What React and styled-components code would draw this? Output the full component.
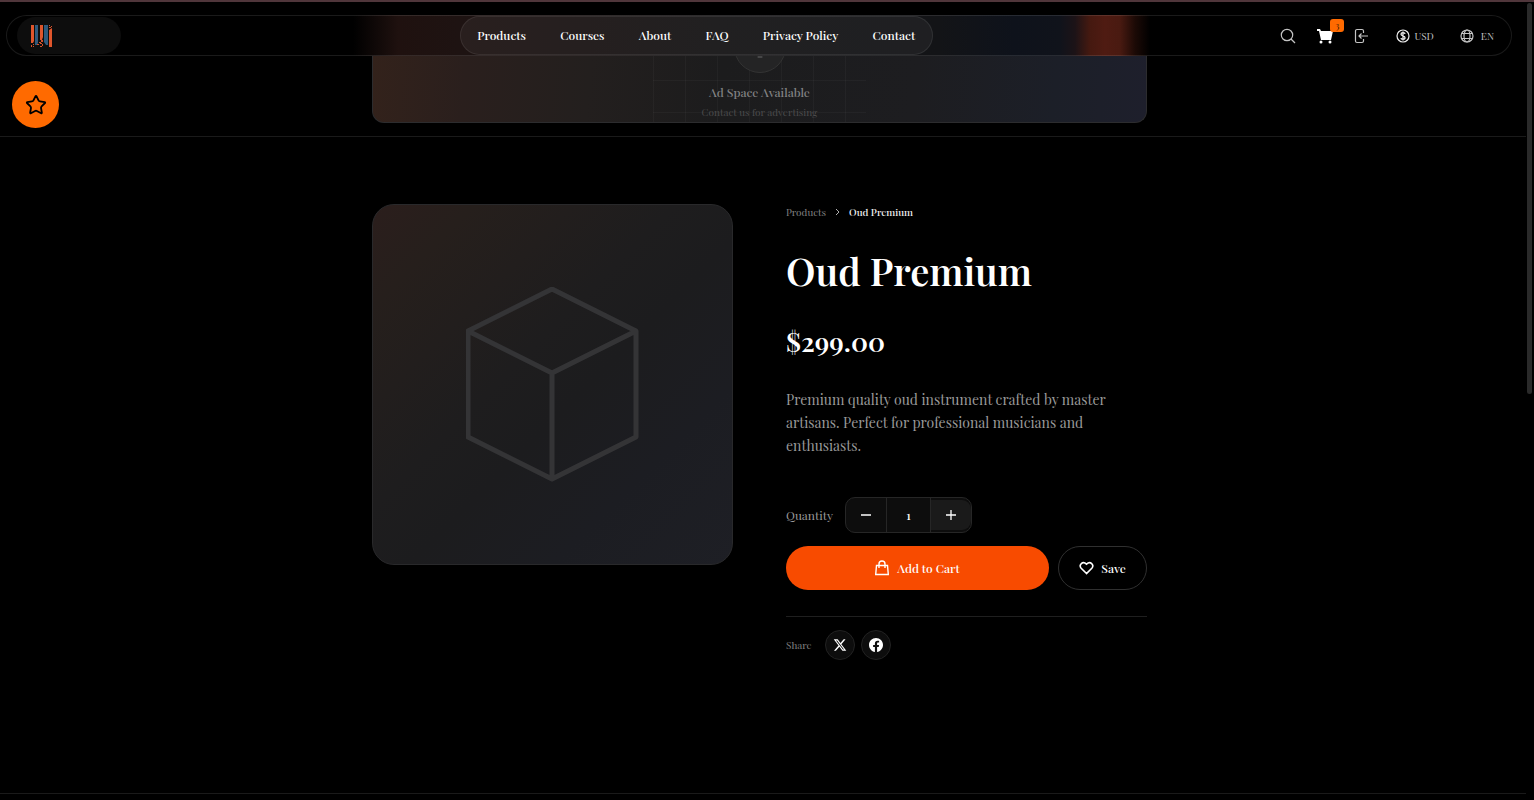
import { useState } from "react";
import styled, { createGlobalStyle, css } from "styled-components";
import { Lightbulb, Star } from "lucide-react";

const GlobalStyle = createGlobalStyle`
  * {
    box-sizing: border-box;
  }

  body {
    margin: 0;
    background-color: #000;
    color: #fff;
    font-family: "Playfair Display", "Liberation Serif", serif;
    font-size: 12px;
  }

  button,
  input {
    font-family: inherit;
    color: inherit;
  }

  a {
    color: inherit;
    text-decoration: none;
  }
`;

const Shell = styled.div`
  display: grid;
  grid-template-columns: 1fr 8px;
  min-height: 100vh;
  border-top: 2px solid #50363b;
`;

const Page = styled.div`
  display: flex;
  flex-direction: column;
`;

const ScrollTrack = styled.div`
  padding: 1px 2px 0 1px;
`;

const ScrollThumb = styled.div`
  height: 49%;
  border-radius: 3px;
  background-color: #2a2a2a;
`;

const Header = styled.header`
  display: flex;
  align-items: center;
  justify-content: space-between;
  height: 41px;
  margin: 13px 14px 0 6px;
  padding: 0 4px 0 10px;
  border: 1px solid rgba(255, 255, 255, 0.1);
  border-radius: 21px;
  background: linear-gradient(
    90deg,
    #000 23%,
    #1f110f 26%,
    #1e1312 30%,
    #161516 47%,
    #131417 62%,
    #0e121b 67%,
    #10131b 70%,
    #1c1317 71%,
    #451910 72%,
    #4f1b12 73%,
    #491a11 74%,
    #1c0a06 75%,
    #000 76%
  );
`;

const LogoLink = styled.a`
  display: flex;
  align-items: center;
  width: 104px;
  height: 37px;
  padding-left: 13px;
  border-radius: 19px;
  background-color: #0d0d0d;
`;

const Nav = styled.nav`
  display: flex;
  align-items: center;
  justify-content: space-between;
  width: 473px;
  height: 39px;
  padding: 0 17px 0 16px;
  border: 1px solid rgba(255, 255, 255, 0.08);
  border-radius: 20px;
  background-color: rgba(255, 255, 255, 0.05);
`;

const NavLink = styled.a`
  font-weight: 500;
  line-height: 16px;
  padding-bottom: 1px;
  white-space: nowrap;
`;

const Tools = styled.div`
  display: flex;
  align-items: center;
`;

const IconButton = styled.button`
  position: relative;
  display: flex;
  align-items: center;
  justify-content: center;
  width: 32px;
  height: 32px;
  margin-right: 5px;
  padding: 0;
  border: none;
  background: none;
  color: ${({ $bright }) => ($bright ? "#fff" : "#c4c4c4")};
`;

const Badge = styled.span`
  position: absolute;
  top: -1px;
  right: -3px;
  width: 14px;
  height: 13px;
  border-radius: 3px;
  background-color: #ff6a00;
  color: #3a1800;
  font-size: 9px;
  line-height: 13px;
  text-align: center;
`;

const TextButton = styled.button`
  display: flex;
  align-items: center;
  gap: ${({ $gap }) => $gap}px;
  height: 32px;
  padding: 0 13px;
  border: none;
  background: none;
  color: #c4c4c4;
  font-size: 10px;
`;

const AdSection = styled.section`
  padding: 0 7px 13px 0;
  border-bottom: 1px solid #1a1a1a;
`;

const AdBanner = styled.div`
  display: flex;
  justify-content: center;
  max-width: 775px;
  height: 67px;
  margin: 0 auto;
  overflow: hidden;
  border: 1px solid #2c2c2e;
  border-top: none;
  border-radius: 0 0 12px 12px;
  background: linear-gradient(
    95deg,
    #33221b 0%,
    #2a1f1d 12%,
    #231f1e 28%,
    #1c1c1d 45%,
    #1d1d20 70%,
    #1c1f28 88%,
    #1e1f2c 100%
  );
`;

const AdContent = styled.div`
  display: flex;
  flex-direction: column;
  align-items: center;
  justify-content: flex-end;
  width: 213px;
  background-image:
    linear-gradient(90deg, rgba(255, 255, 255, 0.03) 1px, transparent 1px),
    linear-gradient(rgba(255, 255, 255, 0.03) 1px, transparent 1px);
  background-size: 32px 32px;
  background-position: 0 24px;
`;

const AdIcon = styled.div`
  display: flex;
  flex-shrink: 0;
  align-items: center;
  justify-content: center;
  width: 52px;
  height: 52px;
  margin-bottom: 9px;
  border: 1px solid #343434;
  border-radius: 50%;
  background-color: #242425;
  color: #68686a;
`;

const AdText = styled.p`
  margin: 0;
  color: ${({ $dim }) => ($dim ? "#4b4b4c" : "#828283")};
  font-size: ${({ $dim }) => ($dim ? 10 : 12)}px;
  font-weight: ${({ $dim }) => ($dim ? 400 : 500)};
  line-height: 20px;
`;

const FavouriteButton = styled.button`
  position: fixed;
  top: 81px;
  left: 12px;
  display: flex;
  align-items: center;
  justify-content: center;
  width: 47px;
  height: 47px;
  padding: 0;
  border: none;
  border-radius: 50%;
  background-color: #ff6a00;
  color: #000;
`;

const Main = styled.main`
  padding: 67px 7px 133px 0;
`;

const Product = styled.div`
  display: grid;
  grid-template-columns: 1fr 1fr;
  gap: 53px;
  align-items: start;
  max-width: 775px;
  margin: 0 auto;
`;

const ProductImage = styled.div`
  display: flex;
  align-items: center;
  justify-content: center;
  aspect-ratio: 1;
  border: 1px solid #29292b;
  border-radius: 22px;
  background: linear-gradient(
    135deg,
    #2b1e1c 0%,
    #261f1c 14%,
    #1e1d1e 42%,
    #1c1c1e 55%,
    #1c1d22 75%,
    #1e1f25 100%
  );
  color: #343436;
`;

const Details = styled.div`
  display: flex;
  flex-direction: column;
`;

const Breadcrumb = styled.nav`
  display: flex;
  align-items: center;
  gap: 8px;
  color: #808080;
  font-size: 10px;
  line-height: 16px;
`;

const Current = styled.span`
  color: #f2f2f2;
  font-weight: 500;
`;

const Title = styled.h1`
  margin: 27px 0 0;
  font-size: 38px;
  font-weight: 600;
  line-height: 48px;
`;

const Price = styled.p`
  margin: 28px 0 0;
  font-size: 27px;
  font-weight: 600;
  line-height: 36px;
`;

const Description = styled.p`
  margin: 29px 0 0;
  color: #999;
  font-size: 14px;
  line-height: 23px;
`;

const QuantityRow = styled.div`
  display: flex;
  align-items: center;
  gap: 12px;
  margin-top: 40px;
  color: #999;
`;

const Stepper = styled.div`
  display: flex;
  align-items: center;
  width: 127px;
  height: 36px;
  overflow: hidden;
  border: 1px solid #262626;
  border-radius: 10px;
  background-color: #0d0d0d;
  color: #fff;
`;

const StepButton = styled.button`
  display: flex;
  align-items: center;
  justify-content: center;
  width: 40px;
  height: 30px;
  padding: 0;
  border: none;
  border-radius: ${({ $active }) => ($active ? "0 9px 9px 0" : "0")};
  background-color: ${({ $active }) => ($active ? "#1a1a1a" : "transparent")};
`;

const QuantityInput = styled.input`
  width: 45px;
  height: 34px;
  padding: 0;
  border: solid #262626;
  border-width: 0 1px;
  background: none;
  font-size: 12px;
  font-weight: 500;
  text-align: center;
`;

const Actions = styled.div`
  display: flex;
  gap: 9px;
  margin-top: 13px;
`;

const pill = css`
  display: flex;
  align-items: center;
  justify-content: center;
  height: 44px;
  padding: 0 0 1px;
  border-radius: 22px;
  font-size: 12px;
  font-weight: 500;
`;

const AddButton = styled.button`
  ${pill}
  flex: 1;
  gap: 8px;
  border: none;
  background-color: #f84b00;
`;

const SaveButton = styled.button`
  ${pill}
  width: 89px;
  gap: 7px;
  border: 1px solid #303030;
  background: none;
`;

const ShareRow = styled.div`
  display: flex;
  align-items: center;
  gap: 6px;
  margin-top: 26px;
  padding-top: 13px;
  border-top: 1px solid #1f1f1f;
`;

const ShareLabel = styled.span`
  margin-right: 7px;
  color: #808080;
  font-size: 10px;
`;

const ShareLink = styled.a`
  display: flex;
  align-items: center;
  justify-content: center;
  width: 30px;
  height: 30px;
  border: 1px solid #222;
  border-radius: 50%;
  background-color: #0d0d0d;
`;

const Footer = styled.footer`
  border-top: 1px solid #1a1a1a;
`;

const navItems = [
  "Products",
  "Courses",
  "About",
  "FAQ",
  "Privacy Policy",
  "Contact",
];

const Logo = () => (
  <svg width="24" height="24" viewBox="0 0 24 24">
    <path fill="#e0562c" d="M1 1h3v16l-1 2H1zM10 1h3v12l-1 3h-2zM19 6l3-2v19h-3z" />
    <path fill="#2f5a7c" d="M5 1h3v18l-1 2H5zM14 1h4v20h-2l-2-3z" />
    <path
      fill="#d4512b"
      d="M1 21h1v2H1zM3 20h1v1H3zM3 22h1v1H3zM7 20h2v1H7zM9 18h2v1H9zM11 16h2v2h-2zM10 19h2v1h-2zM12 20h1v2h-1zM10 22h2v1h-2zM19 1h1v1h-1zM21 2h1v1h-1zM19 3h2v1h-2z"
    />
  </svg>
);

const SearchIcon = () => (
  <svg width="16" height="16" viewBox="0 0 16 16" fill="none" stroke="currentColor" strokeWidth="1.200">
    <circle cx="7" cy="7" r="5.700" />
    <path d="M11 11l4 4" />
  </svg>
);

const CartIcon = () => (
  <svg width="18" height="18" viewBox="0 0 18 18" fill="currentColor">
    <path d="M1 2h3l1 2h12l-2 9H5L3 4H1z" />
    <circle cx="5" cy="15" r="1.500" />
    <circle cx="14" cy="15" r="1.500" />
  </svg>
);

const LoginIcon = () => (
  <svg width="16" height="16" viewBox="0 0 16 16" fill="none" stroke="currentColor" strokeWidth="1.200">
    <path d="M9.500 5V3A1.500 1.500 0 0 0 8 1.500H3A1.500 1.500 0 0 0 1.500 3v10A1.500 1.500 0 0 0 3 14.500h5a1.500 1.500 0 0 0 1.500-1.500v-2" />
    <path d="M14 8H5M7.500 5.500L5 8l2.500 2.500" />
  </svg>
);

const DollarIcon = () => (
  <svg width="14" height="14" viewBox="0 0 14 14" fill="none" stroke="#eee">
    <circle cx="7" cy="7" r="6" strokeWidth="1.200" />
    <path
      strokeWidth="1.300"
      d="M9 5C9 4 8 3.700 7 3.700S5 4 5 5.200C5 7.300 9 6.500 9 8.700 9 10 8 10.300 7 10.300S5 10 5 9M7 2.500v9"
    />
  </svg>
);

const GlobeIcon = () => (
  <svg width="14" height="14" viewBox="0 0 14 14" fill="none" stroke="currentColor" strokeWidth="1.200">
    <circle cx="7" cy="7" r="6" />
    <ellipse cx="7" cy="7" rx="3" ry="6" />
    <path d="M1.500 4.500h11M1.500 9.500h11" />
  </svg>
);

const CubeIcon = () => (
  <svg
    width="174"
    height="196"
    viewBox="0 0 174 196"
    fill="none"
    stroke="currentColor"
    strokeWidth="5"
    strokeLinejoin="round"
  >
    <path d="M86 2l84 42v106l-84 42-84-42V44zM2 44l84 42 84-42M86 86v106" />
  </svg>
);

const ChevronIcon = () => (
  <svg width="7" height="9" viewBox="0 0 7 9" fill="none" stroke="#b0b0b0">
    <path d="M2 1l3 3-3 3" />
  </svg>
);

const BagIcon = () => (
  <svg width="14" height="16" viewBox="0 0 14 16" fill="none" stroke="currentColor" strokeWidth="1.400">
    <path d="M1.500 5.500h11l.8 9H.7zM4 8V4a3 3 0 0 1 6 0v4" />
  </svg>
);

const HeartIcon = () => (
  <svg width="15" height="14" viewBox="0 0 15 14" fill="none" stroke="currentColor" strokeWidth="1.600">
    <path d="M7.500 12.500L2.200 7.200C-.5 4 3.500-.5 7.500 3.200c4-3.700 8 .8 5.300 4z" />
  </svg>
);

const XIcon = () => (
  <svg width="14" height="14" viewBox="0 0 24 24" fill="currentColor">
    <path d="M18.244 2.250h3.308l-7.227 8.260 8.502 11.240H16.170l-5.214-6.817L4.990 21.750H1.680l7.730-8.835L1.254 2.250H8.080l4.713 6.231zm-1.161 17.520h1.833L7.084 4.126H5.117z" />
  </svg>
);

const FacebookIcon = () => (
  <svg width="14" height="14" viewBox="0 0 24 24" fill="currentColor">
    <path d="M24 12.073C24 5.405 18.627 0 12 0S0 5.405 0 12.073C0 18.100 4.388 23.094 10.125 24v-8.437H7.078v-3.490h3.047v-2.660c0-3.025 1.792-4.697 4.533-4.697 1.312 0 2.686.236 2.686.236v2.971H15.830c-1.491 0-1.956.93-1.956 1.886v2.264h3.328l-.532 3.490h-2.796V24C19.612 23.094 24 18.100 24 12.073z" />
  </svg>
);

const SignIcon = ({ plus }) => (
  <svg width="12" height="12" viewBox="0 0 12 12" fill="none" stroke="currentColor" strokeWidth="1.300">
    <path d={plus ? "M1 6h10M6 1v10" : "M1 6h10"} />
  </svg>
);

const App = () => {
  const [quantity, setQuantity] = useState(1);

  return (
    <>
      <GlobalStyle />
      <Shell>
        <Page>
          <Header>
            <LogoLink href="#home" aria-label="Home">
              <Logo />
            </LogoLink>
            <Nav>
              {navItems.map((item) => (
                <NavLink key={item} href="#menu">
                  {item}
                </NavLink>
              ))}
            </Nav>
            <Tools>
              <IconButton aria-label="Search">
                <SearchIcon />
              </IconButton>
              <IconButton $bright aria-label="Cart">
                <CartIcon />
                <Badge>3</Badge>
              </IconButton>
              <IconButton aria-label="Log in">
                <LoginIcon />
              </IconButton>
              <TextButton $gap={4}>
                <DollarIcon />
                USD
              </TextButton>
              <TextButton $gap={7}>
                <GlobeIcon />
                EN
              </TextButton>
            </Tools>
          </Header>

          <AdSection>
            <AdBanner>
              <AdContent>
                <AdIcon>
                  <Lightbulb size={24} strokeWidth={1} />
                </AdIcon>
                <AdText>Ad Space Available</AdText>
                <AdText $dim>Contact us for advertising</AdText>
              </AdContent>
            </AdBanner>
          </AdSection>

          <Main>
            <Product>
              <ProductImage>
                <CubeIcon />
              </ProductImage>
              <Details>
                <Breadcrumb>
                  <a href="#products">Products</a>
                  <ChevronIcon />
                  <Current>Oud Premium</Current>
                </Breadcrumb>
                <Title>Oud Premium</Title>
                <Price>$299.00</Price>
                <Description>
                  Premium quality oud instrument crafted by master artisans.
                  Perfect for professional musicians and enthusiasts.
                </Description>
                <QuantityRow>
                  <label htmlFor="quantity">Quantity</label>
                  <Stepper>
                    <StepButton
                      aria-label="Decrease quantity"
                      onClick={() => setQuantity(Math.max(1, quantity - 1))}
                    >
                      <SignIcon />
                    </StepButton>
                    <QuantityInput
                      id="quantity"
                      value={quantity}
                      onChange={(e) => setQuantity(Number(e.target.value) || 1)}
                    />
                    <StepButton
                      $active
                      aria-label="Increase quantity"
                      onClick={() => setQuantity(quantity + 1)}
                    >
                      <SignIcon plus />
                    </StepButton>
                  </Stepper>
                </QuantityRow>
                <Actions>
                  <AddButton>
                    <BagIcon />
                    Add to Cart
                  </AddButton>
                  <SaveButton>
                    <HeartIcon />
                    Save
                  </SaveButton>
                </Actions>
                <ShareRow>
                  <ShareLabel>Share</ShareLabel>
                  <ShareLink href="#x" aria-label="Share on X">
                    <XIcon />
                  </ShareLink>
                  <ShareLink href="#facebook" aria-label="Share on Facebook">
                    <FacebookIcon />
                  </ShareLink>
                </ShareRow>
              </Details>
            </Product>
          </Main>
          <Footer />
        </Page>
        <ScrollTrack aria-hidden="true">
          <ScrollThumb />
        </ScrollTrack>
      </Shell>
      <FavouriteButton aria-label="Favourites">
        <Star size={22} strokeWidth={2} />
      </FavouriteButton>
    </>
  );
};

export default App;
